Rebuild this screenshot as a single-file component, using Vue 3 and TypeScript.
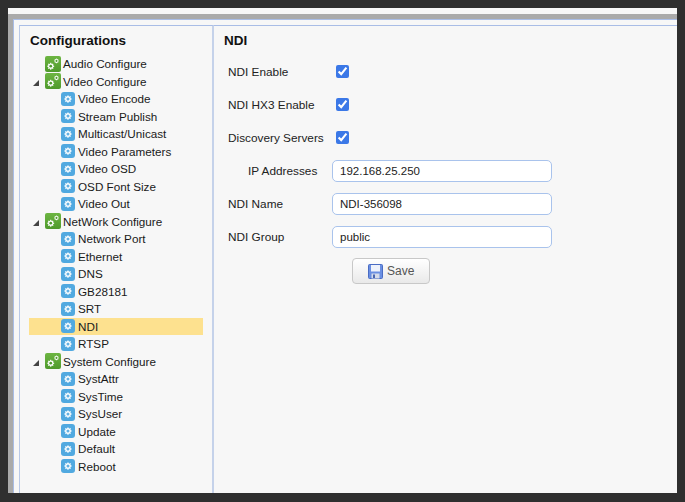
<script setup lang="ts">
interface TreeItem {
  label: string
  kind: 'group' | 'leaf'
  open?: boolean
  active?: boolean
}

const items: TreeItem[] = [
  { label: 'Audio Configure', kind: 'group' },
  { label: 'Video Configure', kind: 'group', open: true },
  { label: 'Video Encode', kind: 'leaf' },
  { label: 'Stream Publish', kind: 'leaf' },
  { label: 'Multicast/Unicast', kind: 'leaf' },
  { label: 'Video Parameters', kind: 'leaf' },
  { label: 'Video OSD', kind: 'leaf' },
  { label: 'OSD Font Size', kind: 'leaf' },
  { label: 'Video Out', kind: 'leaf' },
  { label: 'NetWork Configure', kind: 'group', open: true },
  { label: 'Network Port', kind: 'leaf' },
  { label: 'Ethernet', kind: 'leaf' },
  { label: 'DNS', kind: 'leaf' },
  { label: 'GB28181', kind: 'leaf' },
  { label: 'SRT', kind: 'leaf' },
  { label: 'NDI', kind: 'leaf', active: true },
  { label: 'RTSP', kind: 'leaf' },
  { label: 'System Configure', kind: 'group', open: true },
  { label: 'SystAttr', kind: 'leaf' },
  { label: 'SysTime', kind: 'leaf' },
  { label: 'SysUser', kind: 'leaf' },
  { label: 'Update', kind: 'leaf' },
  { label: 'Default', kind: 'leaf' },
  { label: 'Reboot', kind: 'leaf' },
]

const checks = ['NDI Enable', 'NDI HX3 Enable', 'Discovery Servers']

const gearPath =
  'M7 1.6h2l.3 1.7 1.2.5 1.4-1 1.4 1.4-1 1.4.5 1.2 1.7.3v2l-1.7.3-.5 1.2 1 1.4-1.4 1.4-1.4-1-1.2.5-.3 1.7H7l-.3-1.7-1.2-.5-1.4 1-1.4-1.4 1-1.4-.5-1.2-1.7-.3v-2l1.7-.3.5-1.2-1-1.4 1.4-1.4 1.4 1 1.2-.5z'
</script>

<template>
  <div class="window">
    <div class="shell">
      <aside class="side">
        <h2 class="side-title">Configurations</h2>
        <ul class="tree">
          <li
            v-for="item in items"
            :key="item.label"
            class="row"
            :class="[item.kind, { active: item.active }]"
          >
            <i v-if="item.open" class="arrow"></i>
            <span v-if="item.kind === 'group'" class="ico ico-group">
              <svg width="16" height="16" viewBox="0 0 16 16">
                <g transform="translate(1.5 6) scale(.53)">
                  <path :d="gearPath" fill="#fff" />
                  <circle cx="8" cy="8" r="2.6" fill="#4f9a2c" />
                </g>
                <g transform="translate(8.6 2) scale(.36)">
                  <path :d="gearPath" fill="#fff" />
                  <circle cx="8" cy="8" r="2.8" fill="#4f9a2c" />
                </g>
              </svg>
            </span>
            <span v-else class="ico ico-leaf">
              <svg width="14" height="14" viewBox="0 0 14 14">
                <g transform="translate(2.5 2.5) scale(.56)">
                  <path :d="gearPath" fill="#fff" />
                  <circle cx="8" cy="8" r="2.7" fill="#62b0e3" />
                </g>
              </svg>
            </span>
            <span class="label">{{ item.label }}</span>
          </li>
        </ul>
      </aside>
      <main class="panel">
        <h2 class="panel-title">NDI</h2>
        <div v-for="label in checks" :key="label" class="check-row">
          <span class="field-label">{{ label }}</span>
          <input type="checkbox" class="check" checked />
        </div>
        <div class="input-row">
          <span class="field-label ip">IP Addresses</span>
          <input class="text" value="192.168.25.250" />
        </div>
        <div class="input-row">
          <span class="field-label">NDI Name</span>
          <input class="text" value="NDI-356098" />
        </div>
        <div class="input-row">
          <span class="field-label">NDI Group</span>
          <input class="text" value="public" />
        </div>
        <button class="save" type="button">
          <svg width="15" height="15" viewBox="0 0 15 15">
            <rect x="0.5" y="0.5" width="14" height="14" rx="1" fill="#6a8fe2" stroke="#4a6cc4" />
            <rect x="3" y="1" width="9" height="6.5" fill="#eef2fb" />
            <rect x="3.5" y="9.5" width="8" height="5" fill="#d4dbea" />
            <rect x="5" y="10.5" width="2" height="3.5" fill="#4a66b0" />
          </svg>
          <span>Save</span>
        </button>
      </main>
    </div>
  </div>
</template>

<style>
html,
body {
  margin: 0;
  background: #2f2f2f;
}
</style>

<style scoped>
.window {
  box-sizing: border-box;
  width: 669px;
  height: 485px;
  margin: 8px 0 0 8px;
  overflow: hidden;
  background: #f7f7f7;
  padding-top: 6px;
  font-family: "Liberation Sans", Arial, sans-serif;
  color: #222;
}
.shell {
  box-sizing: border-box;
  display: flex;
  height: 479px;
  background: #f7f7f7;
  border-top: 5px solid #aaa;
  border-left: 5px solid #aaa;
  box-shadow: inset 1px 1px 0 #a9bde6;
  padding: 6px 0 0 6px;
}
.side {
  box-sizing: border-box;
  width: 195px;
  height: 480px;
  flex: none;
  border-top: 1px solid #a9bde6;
  border-left: 1px solid #b9c9e8;
  border-right: 2px solid #c5d2ea;
  padding: 6px 0 0 9px;
}
.side-title {
  margin: 0 0 5px 1px;
  font-size: 13.5px;
  line-height: 18px;
  font-weight: 700;
  color: #111;
}
.tree {
  list-style: none;
  margin: 0;
  padding: 0;
  width: 174px;
}
.row {
  position: relative;
  display: flex;
  align-items: center;
  height: 17.5px;
  font-size: 11.7px;
  color: #1a1a1a;
}
.row.group {
  padding-left: 16px;
}
.row.leaf {
  padding-left: 32px;
}
.row.active {
  background: #fde18f;
}
.arrow {
  position: absolute;
  left: 4px;
  top: 7px;
  width: 0;
  height: 0;
  border-style: solid;
  border-width: 0 0 6px 6px;
  border-color: transparent transparent #444 transparent;
}
.ico {
  display: flex;
  flex: none;
  align-items: center;
  justify-content: center;
  margin-right: 2px;
}
.ico-group {
  width: 16px;
  height: 16px;
  border-radius: 2px;
  background: linear-gradient(#6db542, #4f9a2c);
}
.ico-leaf {
  width: 14px;
  height: 14px;
  border-radius: 3px;
  background: #51a9e0;
  margin-right: 3px;
}
.panel {
  flex: 1;
  border-top: 1px solid #a9bde6;
  padding: 0 0 0 10px;
}
.panel-title {
  margin: 1px 0 0;
  font-size: 13.5px;
  line-height: 28px;
  font-weight: 700;
  color: #111;
}
.check-row {
  display: flex;
  align-items: center;
  height: 33px;
  padding-left: 4px;
}
.field-label {
  width: 108px;
  font-size: 11.8px;
  color: #222;
}
.check {
  width: 13px;
  height: 13px;
  margin: 0;
  accent-color: #3b78e7;
}
.input-row {
  display: flex;
  align-items: center;
  height: 33px;
  padding-left: 4px;
}
.input-row .field-label {
  width: 104px;
}
.field-label.ip {
  box-sizing: border-box;
  padding-left: 20px;
}
.text {
  box-sizing: border-box;
  width: 220px;
  height: 22px;
  padding: 0 7px;
  border: 1px solid #a9c3ec;
  border-radius: 5px;
  background: #fff;
  font: 11.5px "Liberation Sans", Arial, sans-serif;
  color: #222;
  outline: none;
}
.save {
  display: flex;
  align-items: center;
  gap: 4px;
  box-sizing: border-box;
  width: 78px;
  height: 26px;
  margin: 5px 0 0 128px;
  padding: 0 0 0 15px;
  border: 1px solid #c8c8c8;
  border-radius: 4px;
  background: linear-gradient(#fff, #e9e9e9);
  font: 12px "Liberation Sans", Arial, sans-serif;
  color: #555;
}
</style>
